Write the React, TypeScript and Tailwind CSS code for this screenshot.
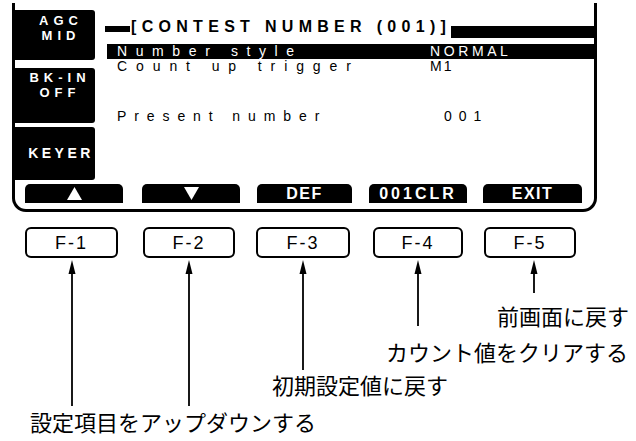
function UpArrow({ length }: { length: number }) {
  return (
    <svg width="10" height={length} viewBox={`0 0 10 ${length}`} className="block shrink-0">
      <polygon points="5,0 1.5,14 8.5,14" fill="black" />
      <line x1="5" y1="12" x2="5" y2={length} stroke="black" strokeWidth="1.8" />
    </svg>
  );
}

function SoftTriangle({ down }: { down?: boolean }) {
  return (
    <svg width="15" height="13" viewBox="0 0 15 13" className="block">
      {down ? (
        <polygon points="0,0 15,0 7.5,13" fill="white" />
      ) : (
        <polygon points="7.5,0 15,13 0,13" fill="white" />
      )}
    </svg>
  );
}

function FKey({ label }: { label: string }) {
  return (
    <div className="flex h-[31px] w-full items-center justify-center rounded-[6px] border-2 border-black font-['Liberation_Sans',Arial,sans-serif] text-[18px] tracking-[2px]">
      {label}
    </div>
  );
}

export default function App() {
  return (
    <div className="h-[441px] w-[636px] overflow-hidden bg-white pt-[3px] font-['Liberation_Sans',Arial,sans-serif] text-black">
      {/* radio panel */}
      <div className="ml-[12px] w-[585px] rounded-b-[14px] border-x-[3px] border-b-[3px] border-black pb-[6px]">
        <div className="flex">
          {/* side keys */}
          <div className="flex w-[80px] flex-col pt-[7px] font-bold text-white">
            <div className="flex h-[50px] flex-col items-center rounded-r-[3px] bg-black pl-[12px] pt-[3px] text-[13px] leading-[15px] tracking-[5px]">
              <span>AGC</span>
              <span>MID</span>
            </div>
            <div className="mt-[8px] flex h-[55px] flex-col items-center rounded-r-[3px] bg-black pl-[10px] pt-[2px] text-[13px] leading-[15px] tracking-[5px]">
              <span>BK-IN</span>
              <span>OFF</span>
            </div>
            <div className="mt-[4px] flex h-[53px] items-center justify-center rounded-r-[3px] bg-black pl-[12px] text-[14px] tracking-[3.5px]">
              KEYER
            </div>
          </div>

          {/* screen */}
          <div className="flex-1 pl-[10px] pt-[14px]">
            <div className="flex items-start">
              <div className="mt-[9px] h-[6px] w-[25px] bg-black" />
              <div className="ml-[1px] text-[16px] font-bold leading-[20px] tracking-[5.3px]">
                [CONTEST NUMBER (001)]
              </div>
              <div className="mt-[9px] h-[12px] flex-1 bg-black" />
            </div>

            <div className="ml-[2px] mt-[6px] flex h-[15px] items-center bg-black text-[14px] leading-[15px] text-white">
              <span className="w-[323px] pl-[10px] tracking-[8.6px]">Number style</span>
              <span className="tracking-[3.6px]">NORMAL</span>
            </div>
            <div className="ml-[2px] flex h-[15px] items-center text-[14px] leading-[15px]">
              <span className="w-[323px] pl-[10px] tracking-[8.9px]">Count up trigger</span>
              <span className="tracking-[2px]">M1</span>
            </div>
            <div className="ml-[2px] mt-[35px] flex h-[15px] items-center text-[14px] leading-[15px]">
              <span className="w-[323px] pl-[10px] tracking-[7.9px]">Present number</span>
              <span className="pl-[14px] tracking-[7px]">001</span>
            </div>
          </div>
        </div>

        {/* soft keys */}
        <div className="mt-[4px] flex h-[19px] text-[16px] font-bold leading-[19px] text-white">
          <div className="ml-[10px] flex w-[98px] items-center justify-center rounded-t-[5px] bg-black">
            <SoftTriangle />
          </div>
          <div className="ml-[19px] flex w-[98px] items-center justify-center rounded-t-[5px] bg-black">
            <SoftTriangle down />
          </div>
          <div className="ml-[17px] flex w-[95px] items-center justify-center rounded-t-[5px] bg-black tracking-[1.5px]">
            DEF
          </div>
          <div className="ml-[17px] flex w-[98px] items-center justify-center rounded-t-[5px] bg-black tracking-[3px]">
            001CLR
          </div>
          <div className="ml-[16px] flex w-[99px] items-center justify-center rounded-t-[5px] bg-black tracking-[1.5px]">
            EXIT
          </div>
        </div>
      </div>

      {/* function keys with callouts */}
      <div className="mt-[15px] flex items-start font-['Noto_Sans_CJK_JP',sans-serif] text-[22px] leading-[26px]">
        <div className="ml-[25px] flex w-[93px] flex-col">
          <FKey label="F-1" />
          <div className="mt-[2px] flex justify-center">
            <UpArrow length={146} />
          </div>
          <div className="ml-[5px] mt-[2px] whitespace-nowrap">設定項目をアップダウンする</div>
        </div>
        <div className="ml-[25px] flex w-[92px] flex-col">
          <FKey label="F-2" />
          <div className="mt-[2px] flex justify-center">
            <UpArrow length={146} />
          </div>
        </div>
        <div className="ml-[21px] flex w-[94px] flex-col">
          <FKey label="F-3" />
          <div className="mt-[2px] flex justify-center">
            <UpArrow length={110} />
          </div>
          <div className="ml-[16px] mt-[1px] whitespace-nowrap">初期設定値に戻す</div>
        </div>
        <div className="ml-[23px] flex w-[90px] flex-col">
          <FKey label="F-4" />
          <div className="mt-[2px] flex justify-center">
            <UpArrow length={66} />
          </div>
          <div className="ml-[13px] mt-[12px] whitespace-nowrap">カウント値をクリアする</div>
        </div>
        <div className="ml-[21px] flex w-[92px] flex-col">
          <FKey label="F-5" />
          <div className="mt-[2px] flex justify-center pl-[8px]">
            <UpArrow length={33} />
          </div>
          <div className="ml-[13px] mt-[9px] whitespace-nowrap">前画面に戻す</div>
        </div>
      </div>
    </div>
  );
}
